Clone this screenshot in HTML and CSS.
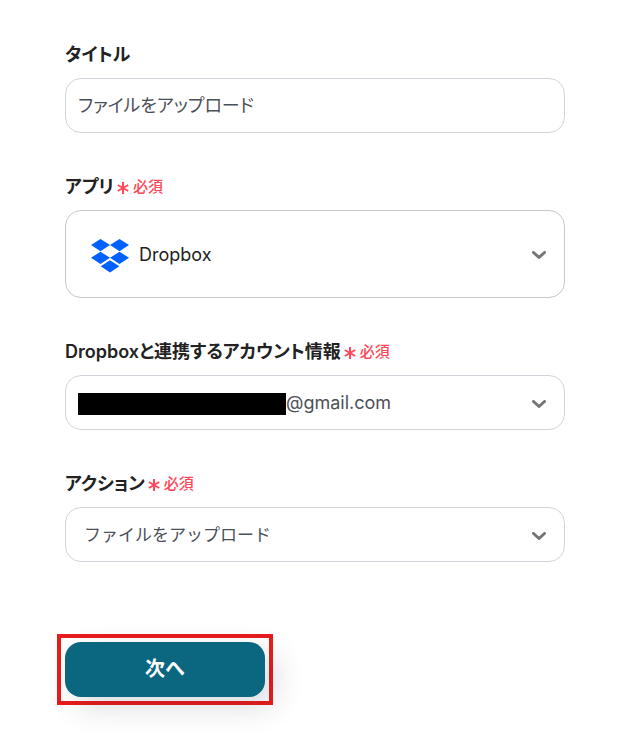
FILE: index.html
```html
<!DOCTYPE html>
<html lang="ja">
<head>
    <meta charset="UTF-8">
    <meta name="viewport" content="width=device-width, initial-scale=1.0">
    <title>アクションの設定</title>
    <link rel="stylesheet" href="styles.css">
</head>
<body>
    <form class="action-form">
        <div class="field">
            <div class="field-label">
                <label for="title">タイトル</label>
            </div>
            <input class="control" type="text" id="title" value="ファイルをアップロード">
        </div>

        <div class="field">
            <div class="field-label">
                <label for="app">アプリ</label>
                <span class="required">
                    <svg class="asterisk" viewBox="0 0 12 12"><path d="M6 0v12M0.8 3l10.4 6M11.2 3l-10.4 6"/></svg>
                    必須
                </span>
            </div>
            <div class="select-box">
                <select class="control control-app" id="app">
                    <option>Dropbox</option>
                </select>
                <svg class="app-logo" viewBox="0 0 38 34"><path d="M9.5 0L19 6.1l-9.5 6.1L0 6.1zM28.5 0L38 6.1l-9.5 6.1L19 6.1zM9.5 12.7l9.5 6.1-9.5 6.1L0 18.8zM28.5 12.7l9.5 6.1-9.5 6.1-9.5-6.1zM19 21.2l9.3 6.1L19 33.5l-9.3-6.2z"/></svg>
                <svg class="chevron" viewBox="0 0 14 8"><path d="M1.5 1.5L7 6.5l5.5-5"/></svg>
            </div>
        </div>

        <div class="field">
            <div class="field-label">
                <label for="account">Dropboxと連携するアカウント情報</label>
                <span class="required">
                    <svg class="asterisk" viewBox="0 0 12 12"><path d="M6 0v12M0.8 3l10.4 6M11.2 3l-10.4 6"/></svg>
                    必須
                </span>
            </div>
            <div class="select-box">
                <select class="control control-account" id="account">
                    <option>@gmail.com</option>
                </select>
                <span class="account-mask"></span>
                <svg class="chevron" viewBox="0 0 14 8"><path d="M1.5 1.5L7 6.5l5.5-5"/></svg>
            </div>
        </div>

        <div class="field">
            <div class="field-label">
                <label for="action">アクション</label>
                <span class="required">
                    <svg class="asterisk" viewBox="0 0 12 12"><path d="M6 0v12M0.8 3l10.4 6M11.2 3l-10.4 6"/></svg>
                    必須
                </span>
            </div>
            <div class="select-box">
                <select class="control control-action" id="action">
                    <option>ファイルをアップロード</option>
                </select>
                <svg class="chevron" viewBox="0 0 14 8"><path d="M1.5 1.5L7 6.5l5.5-5"/></svg>
            </div>
        </div>

        <div class="highlight">
            <button class="next-button" type="button">次へ</button>
        </div>
    </form>
</body>
</html>
```
FILE: styles.css
```css
* {
    box-sizing: border-box;
}

body {
    margin: 0;
    background: #fff;
    color: #222;
    font-family: Inter, "Noto Sans CJK JP", sans-serif;
    font-size: 18px;
}

.action-form {
    display: flex;
    flex-direction: column;
    gap: 40px;
    padding: 41px 58px 42px 65px;
}

.field {
    display: flex;
    flex-direction: column;
    gap: 10px;
}

.field-label {
    display: flex;
    align-items: center;
    gap: 3px;
    line-height: 27px;
    font-weight: 600;
    font-feature-settings: "palt";
}

.required {
    display: flex;
    align-items: center;
    gap: 4px;
    color: #ff4757;
    font-size: 15px;
    font-weight: 500;
}

.asterisk {
    width: 12px;
    height: 12px;
    margin-top: 3px;
    fill: none;
    stroke: #ff4757;
    stroke-width: 2;
}

.control {
    display: block;
    width: 100%;
    height: 55px;
    margin: 0;
    padding: 0 12px 4px;
    border: 1px solid #d1d5db;
    border-radius: 16px;
    background: #fff;
    color: #4b5058;
    font-family: inherit;
    font-size: 18px;
    font-feature-settings: "palt";
    appearance: none;
}

.select-box {
    position: relative;
}

.select-box .control {
    padding-bottom: 0;
}

.select-box .control-app {
    height: 88px;
    padding-left: 73px;
    border-color: #c8c8c8;
    color: #222;
}

.select-box .control-account {
    padding-left: 220px;
}

.select-box .control-action {
    padding-left: 18px;
    font-size: 17px;
    font-feature-settings: normal;
}

.app-logo {
    position: absolute;
    top: 29px;
    left: 26px;
    width: 38px;
    height: 34px;
    fill: #0061ff;
    pointer-events: none;
}

.account-mask {
    position: absolute;
    top: 18px;
    left: 13px;
    width: 208px;
    height: 22px;
    background: #000;
    pointer-events: none;
}

.chevron {
    position: absolute;
    top: 50%;
    right: 19px;
    width: 14px;
    height: 8px;
    margin-top: -3px;
    fill: none;
    stroke: #757575;
    stroke-width: 3;
    stroke-linecap: round;
    stroke-linejoin: round;
    pointer-events: none;
}

.highlight {
    align-self: flex-start;
    margin: 32px 0 0 -8px;
    padding: 4px;
    border: 4px solid #e81c1c;
}

.next-button {
    display: block;
    width: 200px;
    height: 55px;
    padding: 0 0 4px;
    border: none;
    border-radius: 16px;
    background: #0b6780;
    box-shadow: 10px 10px 30px rgba(30, 40, 60, 0.16);
    color: #fff;
    font-family: inherit;
    font-size: 20px;
    font-weight: 700;
    cursor: pointer;
}
```
